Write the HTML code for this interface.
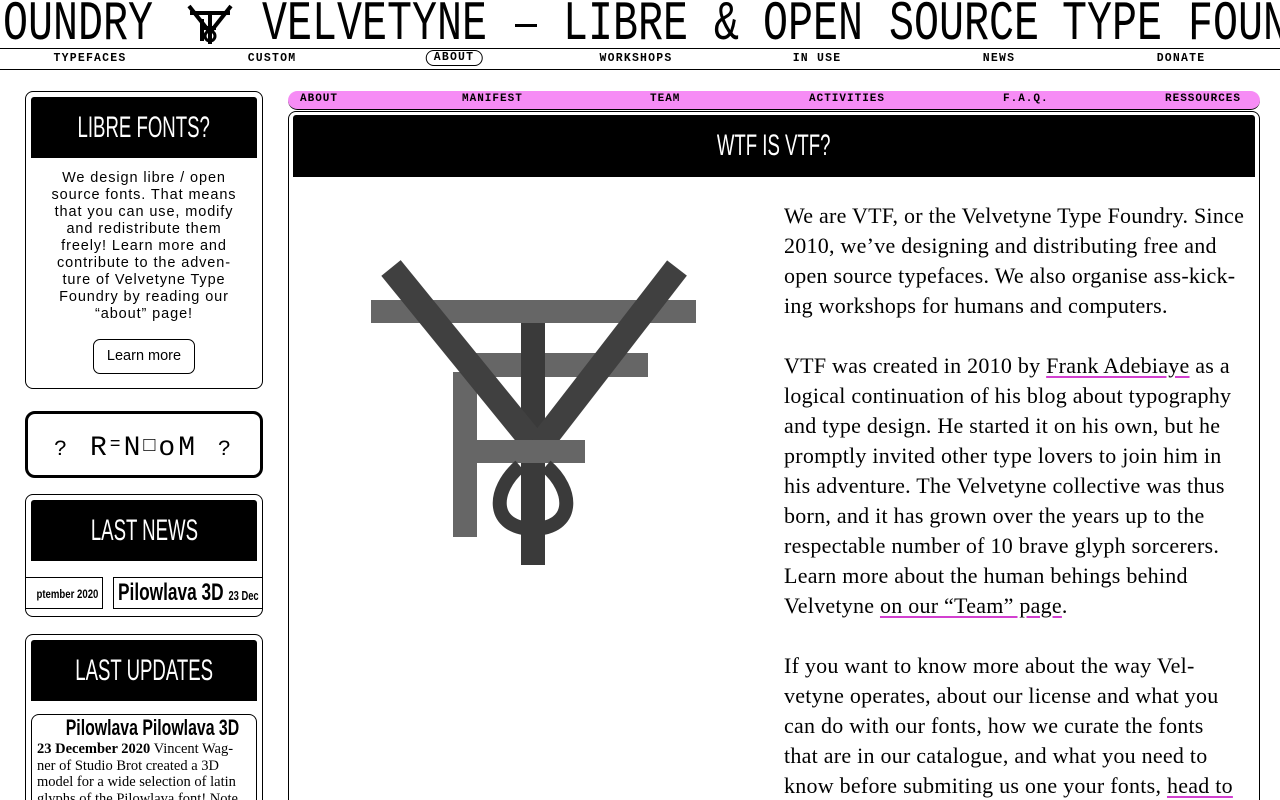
<!DOCTYPE html>
<html><head><meta charset="utf-8">
<style>
*{margin:0;padding:0;box-sizing:border-box}
html,body{width:1280px;height:800px;overflow:hidden}
body{background:#fff;color:#000;font-family:"Liberation Sans",sans-serif;position:relative}
.abs{position:absolute}
.mq{position:absolute;top:-6px;font-family:"Liberation Mono",monospace;font-size:56px;line-height:60px;white-space:nowrap;transform-origin:0 0;transform:scaleX(0.744)}
.nav{position:absolute;top:48px;left:0;width:1280px;height:22px;border-top:1.5px solid #000;border-bottom:1.5px solid #000}
.nav span{position:absolute;top:3px;font-size:11.5px;font-weight:bold;letter-spacing:1.2px;transform:translateX(-50%);font-family:"Liberation Mono",monospace;line-height:14px}
.box{position:absolute;border:1px solid #000;border-radius:8px;background:#fff}
.hd{position:absolute;background:#000;color:#fff;text-align:center;overflow:hidden;border-radius:3px 3px 0 0}
.cond{display:inline-block;transform:scaleX(0.62);transform-origin:50% 50%;white-space:nowrap;font-family:"Liberation Sans",sans-serif}
.side p{position:absolute;left:0;width:236px;text-align:center;font-size:14.5px;line-height:17px;letter-spacing:0.9px;white-space:nowrap}
.pink{position:absolute;left:288px;top:91px;width:972px;height:19px;background:#f68cf5;border-radius:10px;border-bottom:1.5px solid #000}
.pink span{position:absolute;top:2px;font-size:11px;font-weight:bold;letter-spacing:1px;font-family:"Liberation Mono",monospace}
.txt{position:absolute;left:784px;top:201px;height:599px;overflow:hidden;font-family:"Liberation Serif",serif;font-size:22px;line-height:30px;white-space:nowrap;letter-spacing:0.25px}
.txt p{margin-bottom:30px}
.txt p:last-child{margin-bottom:0}
.txt a{color:#000;text-decoration:underline;text-decoration-color:#d23fd0;text-underline-offset:3px}
</style></head><body>

<div class="mq" style="left:3px">OUNDRY</div>
<svg class="abs" style="left:186px;top:4px" width="48" height="42" viewBox="0 0 48 42">
<g fill="none" stroke="#000" stroke-width="4">
<line x1="4" y1="9" x2="44" y2="9"/><line x1="3" y1="2" x2="22" y2="26"/><line x1="45" y1="2" x2="26" y2="26"/>
<line x1="24" y1="9" x2="24" y2="40"/><line x1="16" y1="15" x2="16" y2="37"/><line x1="16" y1="24" x2="30" y2="24"/>
<ellipse cx="24" cy="32" rx="5" ry="5" stroke-width="3"/></g></svg>
<div class="mq" style="left:262px">VELVETYNE</div>
<div class="abs" style="left:515px;top:24px;width:22px;height:3px;background:#000"></div>
<div class="mq" style="left:563px">LIBRE</div>
<div class="mq" style="left:714px">&amp;</div>
<div class="mq" style="left:763px">OPEN</div>
<div class="mq" style="left:889px">SOURCE</div>
<div class="mq" style="left:1062px">TYPE</div>
<div class="mq" style="left:1188px">FOUN</div>

<div class="nav">
<span style="left:90px">TYPEFACES</span><span style="left:272px">CUSTOM</span>
<span style="left:454px;top:1px;border:1.5px solid #000;border-radius:8px;padding:0 7px">ABOUT</span>
<span style="left:636px">WORKSHOPS</span><span style="left:817px">IN USE</span><span style="left:999px">NEWS</span><span style="left:1181px">DONATE</span>
</div>

<div class="side">
<div class="box" style="left:25px;top:91px;width:238px;height:298px">
 <div class="hd" style="left:5px;top:5px;width:226px;height:61px;line-height:61px;font-size:30px"><span class="cond">LIBRE FONTS?</span></div>
 <p style="top:78px">We design libre / open<br>source fonts. That means<br>that you can use, modify<br>and redistribute them<br>freely! Learn more and<br>contribute to the adven-<br>ture of Velvetyne Type<br>Foundry by reading our<br>“about” page!</p>
 <div class="abs" style="left:67px;top:247px;width:102px;height:35px;border:1px solid #000;border-radius:7px;text-align:center;line-height:33px;font-size:14.5px">Learn more</div>
</div>
<div class="box" style="left:25px;top:411px;width:238px;height:67px;border:3px solid #000;border-radius:10px;text-align:center;line-height:62px;font-size:28px;font-family:'Liberation Mono',monospace;letter-spacing:3px;white-space:nowrap"><span style="font-size:22px">?</span> R<span style="font-size:18px;vertical-align:6px">=</span>N<span style="vertical-align:4px;font-size:20px">□</span>oM <span style="font-size:22px">?</span></div>
<div class="box" style="left:25px;top:494px;width:238px;height:123px;overflow:hidden">
 <div class="hd" style="left:5px;top:5px;width:226px;height:61px;line-height:61px;font-size:30px"><span class="cond">LAST NEWS</span></div>
 <div class="abs" style="left:-10px;top:82px;width:87px;height:32px;border:1px solid #000;border-left:none;font-size:12px;font-weight:bold;line-height:32px;text-align:right;padding-right:4px"><span style="display:inline-block;transform:scaleX(0.8);transform-origin:100% 50%">ptember 2020</span></div>
 <div class="abs" style="left:87px;top:82px;width:160px;height:32px;border:1px solid #000;border-right:none;white-space:nowrap;line-height:30px;padding-left:4px"><span style="display:inline-block;transform:scaleX(0.72);transform-origin:0 50%;font-size:24px;font-weight:bold">Pilowlava 3D <span style="font-size:13px">23 Dec</span></span></div>
</div>
<div class="box" style="left:25px;top:634px;width:238px;height:166px;overflow:hidden;border-bottom:none;border-radius:8px 8px 0 0">
 <div class="hd" style="left:5px;top:5px;width:226px;height:61px;line-height:61px;font-size:30px"><span class="cond">LAST UPDATES</span></div>
 <div class="abs" style="left:5px;top:79px;width:226px;height:87px;border:1px solid #000;border-bottom:none;border-radius:8px 8px 0 0;overflow:hidden">
  <div style="text-align:center;font-size:22px;font-weight:bold;line-height:26px"><span class="cond" style="transform:scaleX(0.72)">Pilowlava Pilowlava 3D</span></div>
  <div style="font-family:'Liberation Serif',serif;font-size:14.5px;line-height:16.5px;padding:0 5px;white-space:nowrap"><b>23 December 2020</b> Vincent Wag-<br>ner of Studio Brot created a 3D<br>model for a wide selection of latin<br>glyphs of the Pilowlava font! Note</div>
 </div>
</div>
</div>

<div class="pink">
<span style="left:12px">ABOUT</span><span style="left:174px">MANIFEST</span><span style="left:362px">TEAM</span><span style="left:521px">ACTIVITIES</span><span style="left:715px">F.A.Q.</span><span style="left:877px">RESSOURCES</span>
</div>
<div class="box" style="left:288px;top:111px;width:972px;height:689px;border-bottom:none;border-radius:8px 8px 0 0">
 <div class="hd" style="left:4px;top:3px;width:962px;height:62px;line-height:62px;font-size:30px"><span class="cond">WTF IS VTF?</span></div>
</div>

<svg class="abs" style="left:340px;top:240px" width="380" height="340" viewBox="340 240 380 340">
<rect x="371" y="300" width="325" height="23" fill="#666"/>
<rect x="472" y="353" width="176" height="24" fill="#666"/>
<rect x="521" y="323" width="24" height="242" fill="#3a3a3a"/>
<rect x="453" y="372" width="24" height="165" fill="#666"/>
<line x1="391" y1="268" x2="535" y2="445" stroke="#404040" stroke-width="25"/>
<line x1="677" y1="268" x2="540" y2="445" stroke="#404040" stroke-width="25"/>
<rect x="473" y="440" width="112" height="23" fill="#666"/>
<path d="M520 466 C492 490 490 528 533 529 C576 528 574 490 546 466" fill="none" stroke="#3a3a3a" stroke-width="14"/>
</svg>

<div class="txt">
<p>We are VTF, or the Velvetyne Type Foundry. Since<br>2010, we’ve designing and distributing free and<br>open source typefaces. We also organise ass-kick-<br>ing workshops for humans and computers.</p>
<p>VTF was created in 2010 by <a>Frank Adebiaye</a> as a<br>logical continuation of his blog about typography<br>and type design. He started it on his own, but he<br>promptly invited other type lovers to join him in<br>his adventure. The Velvetyne collective was thus<br>born, and it has grown over the years up to the<br>respectable number of 10 brave glyph sorcerers.<br>Learn more about the human behings behind<br>Velvetyne <a>on our “Team” page</a>.</p>
<p>If you want to know more about the way Vel-<br>vetyne operates, about our license and what you<br>can do with our fonts, how we curate the fonts<br>that are in our catalogue, and what you need to<br>know before submiting us one your fonts, <a>head to</a></p>
</div>
</body></html>
